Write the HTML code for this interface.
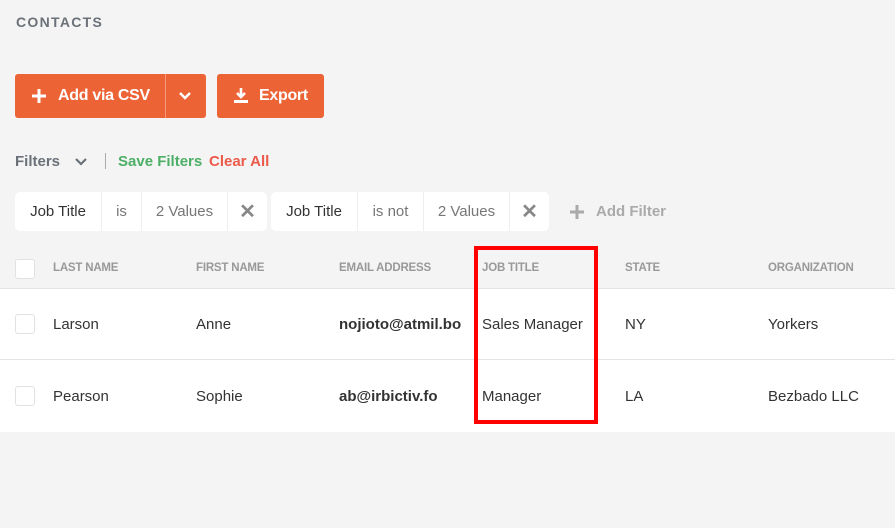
<!DOCTYPE html><html><head><style>
body{margin:0;width:895px;height:528px;background:#f4f4f4;font-family:"Liberation Sans",sans-serif;position:relative;overflow:hidden;color:#333}
.a{position:absolute;white-space:nowrap}
.btn{position:absolute;background:#ec6336;border-radius:3px;color:#fff;font-weight:bold;font-size:16px;letter-spacing:-0.3px}
.chip{position:absolute;top:192px;height:39px;background:#fff;border-radius:5px;display:flex;font-size:15px;color:#333}
.chip div{border-right:1px solid #eee;display:flex;align-items:center;justify-content:center}
.chip div:last-child{border:none}
.hd{position:absolute;top:262px;font-size:11.5px;font-weight:bold;color:#999;letter-spacing:-0.2px}
.cb{position:absolute;left:15px;width:18px;height:18px;background:#fff;border:1px solid #e2e2e2;border-radius:3px}
.c{position:absolute;font-size:15px;color:#333}
</style></head><body>
<div class="a" style="left:16px;top:14px;font-size:14px;font-weight:bold;color:#6b7178;letter-spacing:1.3px">CONTACTS</div>
<div class="btn" style="left:15px;top:74px;width:191px;height:44px">
<svg class="a" style="left:16px;top:14px" width="16" height="16"><path d="M8 1v14M1 8h14" stroke="#fff" stroke-width="3"/></svg>
<span class="a" style="left:43px;top:13px">Add via CSV</span>
<div class="a" style="left:150px;top:0;width:1px;height:44px;background:#f49a7c"></div>
<svg class="a" style="left:163px;top:17px" width="14" height="10"><path d="M2 2l5 5 5-5" stroke="#fff" stroke-width="2.5" fill="none"/></svg>
</div>
<div class="btn" style="left:217px;top:74px;width:107px;height:44px">
<svg class="a" style="left:16px;top:13px" width="16" height="17"><path d="M8 1v9M4 6l4 4 4-4" stroke="#fff" stroke-width="2.6" fill="none"/><rect x="1" y="13" width="14" height="3" fill="#fff"/></svg>
<span class="a" style="left:42px;top:13px">Export</span></div>
<div class="a" style="left:15px;top:153px;font-size:15px;font-weight:bold;color:#6b7178">Filters</div>
<svg class="a" style="left:74px;top:157px" width="14" height="10"><path d="M2 2l5 5 5-5" stroke="#6b7178" stroke-width="2.2" fill="none"/></svg>
<div class="a" style="left:105px;top:153px;width:1px;height:16px;background:#aaa"></div>
<div class="a" style="left:118px;top:153px;font-size:15px;font-weight:bold;color:#4caf65">Save Filters</div>
<div class="a" style="left:209px;top:153px;font-size:15px;font-weight:bold;color:#ec5a4a">Clear All</div>
<div class="chip" style="left:15px;width:252px"><div style="width:86px">Job Title</div><div style="width:39px;color:#777">is</div><div style="width:85px;color:#777">2 Values</div><div style="flex:1;color:#888;font-size:20px;font-weight:bold">✕</div></div>
<div class="chip" style="left:271px;width:278px"><div style="width:86px">Job Title</div><div style="width:65px;color:#777">is not</div><div style="width:85px;color:#777">2 Values</div><div style="flex:1;color:#888;font-size:20px;font-weight:bold">✕</div></div>
<svg class="a" style="left:569px;top:204px" width="16" height="16"><path d="M8 1v14M1 8h14" stroke="#aaa" stroke-width="3"/></svg>
<div class="a" style="left:596px;top:203px;font-size:15px;font-weight:bold;color:#aaa">Add Filter</div>
<div class="cb" style="top:259px"></div>
<div class="hd" style="left:53px">LAST NAME</div><div class="hd" style="left:196px">FIRST NAME</div><div class="hd" style="left:339px">EMAIL ADDRESS</div><div class="hd" style="left:482px">JOB TITLE</div><div class="hd" style="left:625px">STATE</div><div class="hd" style="left:768px">ORGANIZATION</div>
<div class="a" style="left:0;top:288px;width:895px;height:143px;background:#fff;border-top:1px solid #e4e4e4"></div>
<div class="a" style="left:0;top:359px;width:895px;height:1px;background:#e4e4e4"></div>
<div class="cb" style="top:314px"></div><div class="cb" style="top:386px"></div>
<div class="c" style="left:53px;top:316px">Larson</div><div class="c" style="left:196px;top:316px">Anne</div><div class="c" style="left:339px;top:316px;font-weight:bold">nojioto@atmil.bo</div><div class="c" style="left:482px;top:316px">Sales Manager</div><div class="c" style="left:625px;top:316px">NY</div><div class="c" style="left:768px;top:316px">Yorkers</div>
<div class="c" style="left:53px;top:388px">Pearson</div><div class="c" style="left:196px;top:388px">Sophie</div><div class="c" style="left:339px;top:388px;font-weight:bold">ab@irbictiv.fo</div><div class="c" style="left:482px;top:388px">Manager</div><div class="c" style="left:625px;top:388px">LA</div><div class="c" style="left:768px;top:388px">Bezbado LLC</div>
<div class="a" style="left:474px;top:246px;width:116px;height:170px;border:4px solid #f00"></div>
</body></html>
